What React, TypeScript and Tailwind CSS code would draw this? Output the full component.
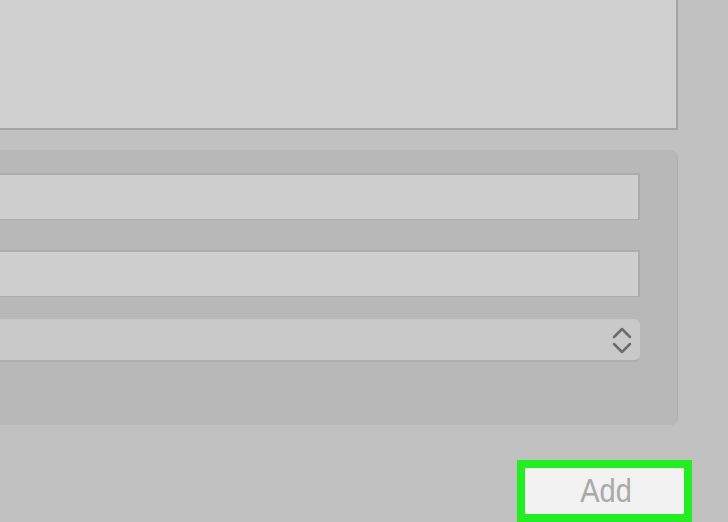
export default function App() {
  return (
    <div
      className="flex h-[522px] w-[728px] flex-col overflow-hidden bg-[#c1c1c1]"
      style={{ fontFamily: '"Liberation Sans", Arial, sans-serif' }}
    >
      {/* Top panel */}
      <div className="h-[130px] w-[678px] shrink-0 border-r-2 border-b-2 border-[#a4a4a4] bg-[#d0d0d0]" />

      {/* Group box */}
      <div className="mt-[20px] flex h-[275px] w-[678px] shrink-0 flex-col rounded-r-lg border-r border-[#b0b0b0] bg-[#b8b8b8] pt-[23px]">
        <div className="h-[47px] w-[640px] border-t-2 border-r-2 border-b border-[#acacac] bg-[#cfcfcf]" />
        <div className="mt-[30px] h-[47px] w-[640px] border-t-2 border-r-2 border-b border-[#acacac] bg-[#cfcfcf]" />
        <div className="mt-[22px] flex h-[43px] w-[640px] items-center justify-end rounded-r-md border-b-2 border-[#adadad] bg-[#c9c9c9] pr-[7px]">
          <svg width="22" height="30" viewBox="0 0 22 30" fill="none" stroke="#6c6c6c" strokeWidth="2.5" strokeLinecap="round" strokeLinejoin="round">
            <path d="M3 12 L11 4 L19 12" />
            <path d="M3 19 L11 27 L19 19" />
          </svg>
        </div>
      </div>

      {/* Add button */}
      <div className="mt-[35px] ml-[517px] flex h-[62px] w-[175px] shrink-0 items-center justify-center border-[8px] border-[#22ee22] bg-[#f2f2f2] pl-[3px]">
        <span className="scale-y-[1.15] text-[29px] leading-none text-[#a9a9a9]">Add</span>
      </div>
    </div>
  );
}
